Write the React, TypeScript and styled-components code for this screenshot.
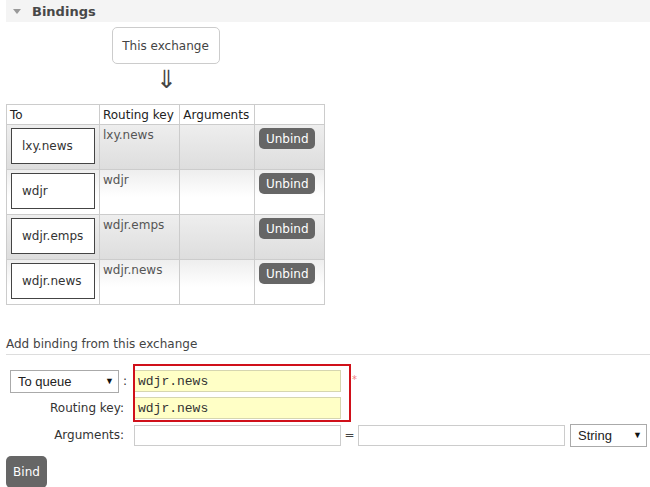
import React from "react";
import styled, { createGlobalStyle } from "styled-components";

const GlobalStyle = createGlobalStyle`
  body {
    margin: 0;
    background: #fff;
    font-family: "DejaVu Sans", Verdana, sans-serif;
    font-size: 12px;
    color: #484848;
  }
`;

const Page = styled.div`
  padding: 0 0 0 6px;
  width: 644px;
`;

const SectionHeader = styled.div`
  height: 22px;
  background: #f4f4f4;
  display: flex;
  align-items: center;
  gap: 11px;
  padding-left: 7px;
  font-size: 13px;
  font-weight: bold;
  color: #484848;
`;

const Caret = styled.span`
  width: 0;
  height: 0;
  border-left: 4px solid transparent;
  border-right: 4px solid transparent;
  border-top: 5px solid #999;
  margin-top: 1px;
`;

const BindingsBlock = styled.div`
  width: 319px;
  display: flex;
  flex-direction: column;
  align-items: center;
`;

const ExchangeBox = styled.div`
  margin-top: 5px;
  box-sizing: border-box;
  width: 108px;
  height: 37px;
  border: 1px solid #ccc;
  border-radius: 5px;
  display: flex;
  align-items: center;
  justify-content: center;
  color: #444;
`;

const Arrow = styled.div`
  height: 40px;
  font-size: 25px;
  line-height: 32px;
  color: #444;
  padding-left: 2px;
`;

const ListTable = styled.table`
  border-collapse: collapse;
  border: 1px solid #ccc;
  align-self: stretch;
  table-layout: fixed;
`;

const HeadCell = styled.th<{ $w: number }>`
  width: ${(p) => p.$w}px;
  height: 20px;
  padding: 0 3px;
  text-align: left;
  font-weight: normal;
  color: #222;
  border: 1px solid #ccc;
  box-sizing: border-box;
`;

const Row = styled.tr<{ $alt: boolean }>`
  height: 45px;
  background: ${(p) =>
    p.$alt
      ? "linear-gradient(#eeeeee, #dddddd)"
      : "linear-gradient(#eeeeee 0%, #ffffff 60%)"};
`;

const Cell = styled.td`
  border: 1px solid #ccc;
  padding: 3px 3px;
  vertical-align: top;
  color: #555;
`;

const QueueCell = styled.td`
  border: 1px solid #ccc;
  padding: 3px 3px 0 4px;
  vertical-align: top;
`;

const QueueBox = styled.div`
  box-sizing: border-box;
  width: 84px;
  height: 36px;
  border: 1px solid #444;
  background: #fff;
  display: flex;
  align-items: center;
  padding-left: 10px;
  color: #333;
`;

const SmallButton = styled.button`
  margin-left: 1px;
  width: 56px;
  height: 21px;
  border: none;
  border-radius: 5px;
  background: #666;
  color: #fff;
  font-family: "DejaVu Sans", Verdana, sans-serif;
  font-size: 12px;
  padding: 0;
`;

const AddTitle = styled.div`
  margin-top: 31px;
  line-height: 16px;
  padding-bottom: 2px;
  border-bottom: 1px solid #ddd;
  color: #444;
`;

const FormGrid = styled.div`
  position: relative;
  margin-top: 15px;
  display: grid;
  grid-template-columns: 128px 207px 17px 207px 82px;
  grid-auto-rows: 22px;
  row-gap: 5px;
  align-items: center;
`;

const LabelCell = styled.div`
  text-align: right;
  padding-right: 10px;
  color: #333;
`;

const SelectLine = styled.div`
  display: flex;
  align-items: center;
  gap: 4px;
  padding-left: 4px;
  color: #333;
`;

const FakeSelect = styled.div<{ $w: number }>`
  box-sizing: border-box;
  width: ${(p) => p.$w}px;
  height: 23px;
  border: 1px solid #aaa;
  background: #fff;
  display: flex;
  align-items: center;
  justify-content: space-between;
  padding: 0 4px 0 7px;
  font-family: "Liberation Sans", Arial, sans-serif;
  font-size: 13px;
  color: #222;
`;

const SelectArrow = styled.span`
  font-size: 9px;
  color: #111;
`;

const TextInput = styled.div<{ $filled?: boolean }>`
  box-sizing: border-box;
  width: 207px;
  height: ${(p) => (p.$filled ? 22 : 21)}px;
  border: 1px solid ${(p) => (p.$filled ? "#d6d6b0" : "#ccc")};
  background: ${(p) => (p.$filled ? "#ffffc6" : "#fff")};
  display: flex;
  align-items: center;
  padding-left: 3px;
  font-family: "Liberation Mono", "Courier New", monospace;
  font-size: 13px;
  color: #333;
`;

const Equals = styled.div`
  text-align: center;
  color: #444;
`;

const Required = styled.div`
  color: #f08080;
  font-size: 10px;
  padding-left: 11px;
  margin-top: -4px;
`;

const Highlight = styled.div`
  position: absolute;
  left: 127px;
  top: -6px;
  width: 218px;
  height: 58px;
  box-sizing: border-box;
  border: 2px solid #d0101a;
  pointer-events: none;
`;

const RightSelect = styled.div`
  padding-left: 5px;
`;

const BindButton = styled.button`
  margin-top: 10px;
  width: 41px;
  height: 32px;
  border: none;
  border-radius: 5px;
  background: #666;
  color: #fff;
  font-family: "DejaVu Sans", Verdana, sans-serif;
  font-size: 12px;
  padding: 0;
`;

const BINDINGS = [
  { queue: "lxy.news", key: "lxy.news" },
  { queue: "wdjr", key: "wdjr" },
  { queue: "wdjr.emps", key: "wdjr.emps" },
  { queue: "wdjr.news", key: "wdjr.news" },
];

export default function App() {
  return (
    <Page>
      <GlobalStyle />
      <SectionHeader>
        <Caret />
        <span>Bindings</span>
      </SectionHeader>

      <BindingsBlock>
        <ExchangeBox>This exchange</ExchangeBox>
        <Arrow>⇓</Arrow>
        <ListTable>
          <thead>
            <tr>
              <HeadCell $w={93}>To</HeadCell>
              <HeadCell $w={81}>Routing key</HeadCell>
              <HeadCell $w={75}>Arguments</HeadCell>
              <HeadCell $w={70}></HeadCell>
            </tr>
          </thead>
          <tbody>
            {BINDINGS.map((b, i) => (
              <Row key={b.queue} $alt={i % 2 === 0}>
                <QueueCell>
                  <QueueBox>{b.queue}</QueueBox>
                </QueueCell>
                <Cell>{b.key}</Cell>
                <Cell></Cell>
                <Cell>
                  <SmallButton>Unbind</SmallButton>
                </Cell>
              </Row>
            ))}
          </tbody>
        </ListTable>
      </BindingsBlock>

      <AddTitle>Add binding from this exchange</AddTitle>

      <FormGrid>
        <SelectLine>
          <FakeSelect $w={109}>
            <span>To queue</span>
            <SelectArrow>▼</SelectArrow>
          </FakeSelect>
          <span>:</span>
        </SelectLine>
        <TextInput $filled>wdjr.news</TextInput>
        <Required>*</Required>
        <div />
        <div />

        <LabelCell>Routing key:</LabelCell>
        <TextInput $filled>wdjr.news</TextInput>
        <div />
        <div />
        <div />

        <LabelCell>Arguments:</LabelCell>
        <TextInput />
        <Equals>=</Equals>
        <TextInput />
        <RightSelect>
          <FakeSelect $w={77}>
            <span>String</span>
            <SelectArrow>▼</SelectArrow>
          </FakeSelect>
        </RightSelect>

        <Highlight />
      </FormGrid>

      <BindButton>Bind</BindButton>
    </Page>
  );
}
